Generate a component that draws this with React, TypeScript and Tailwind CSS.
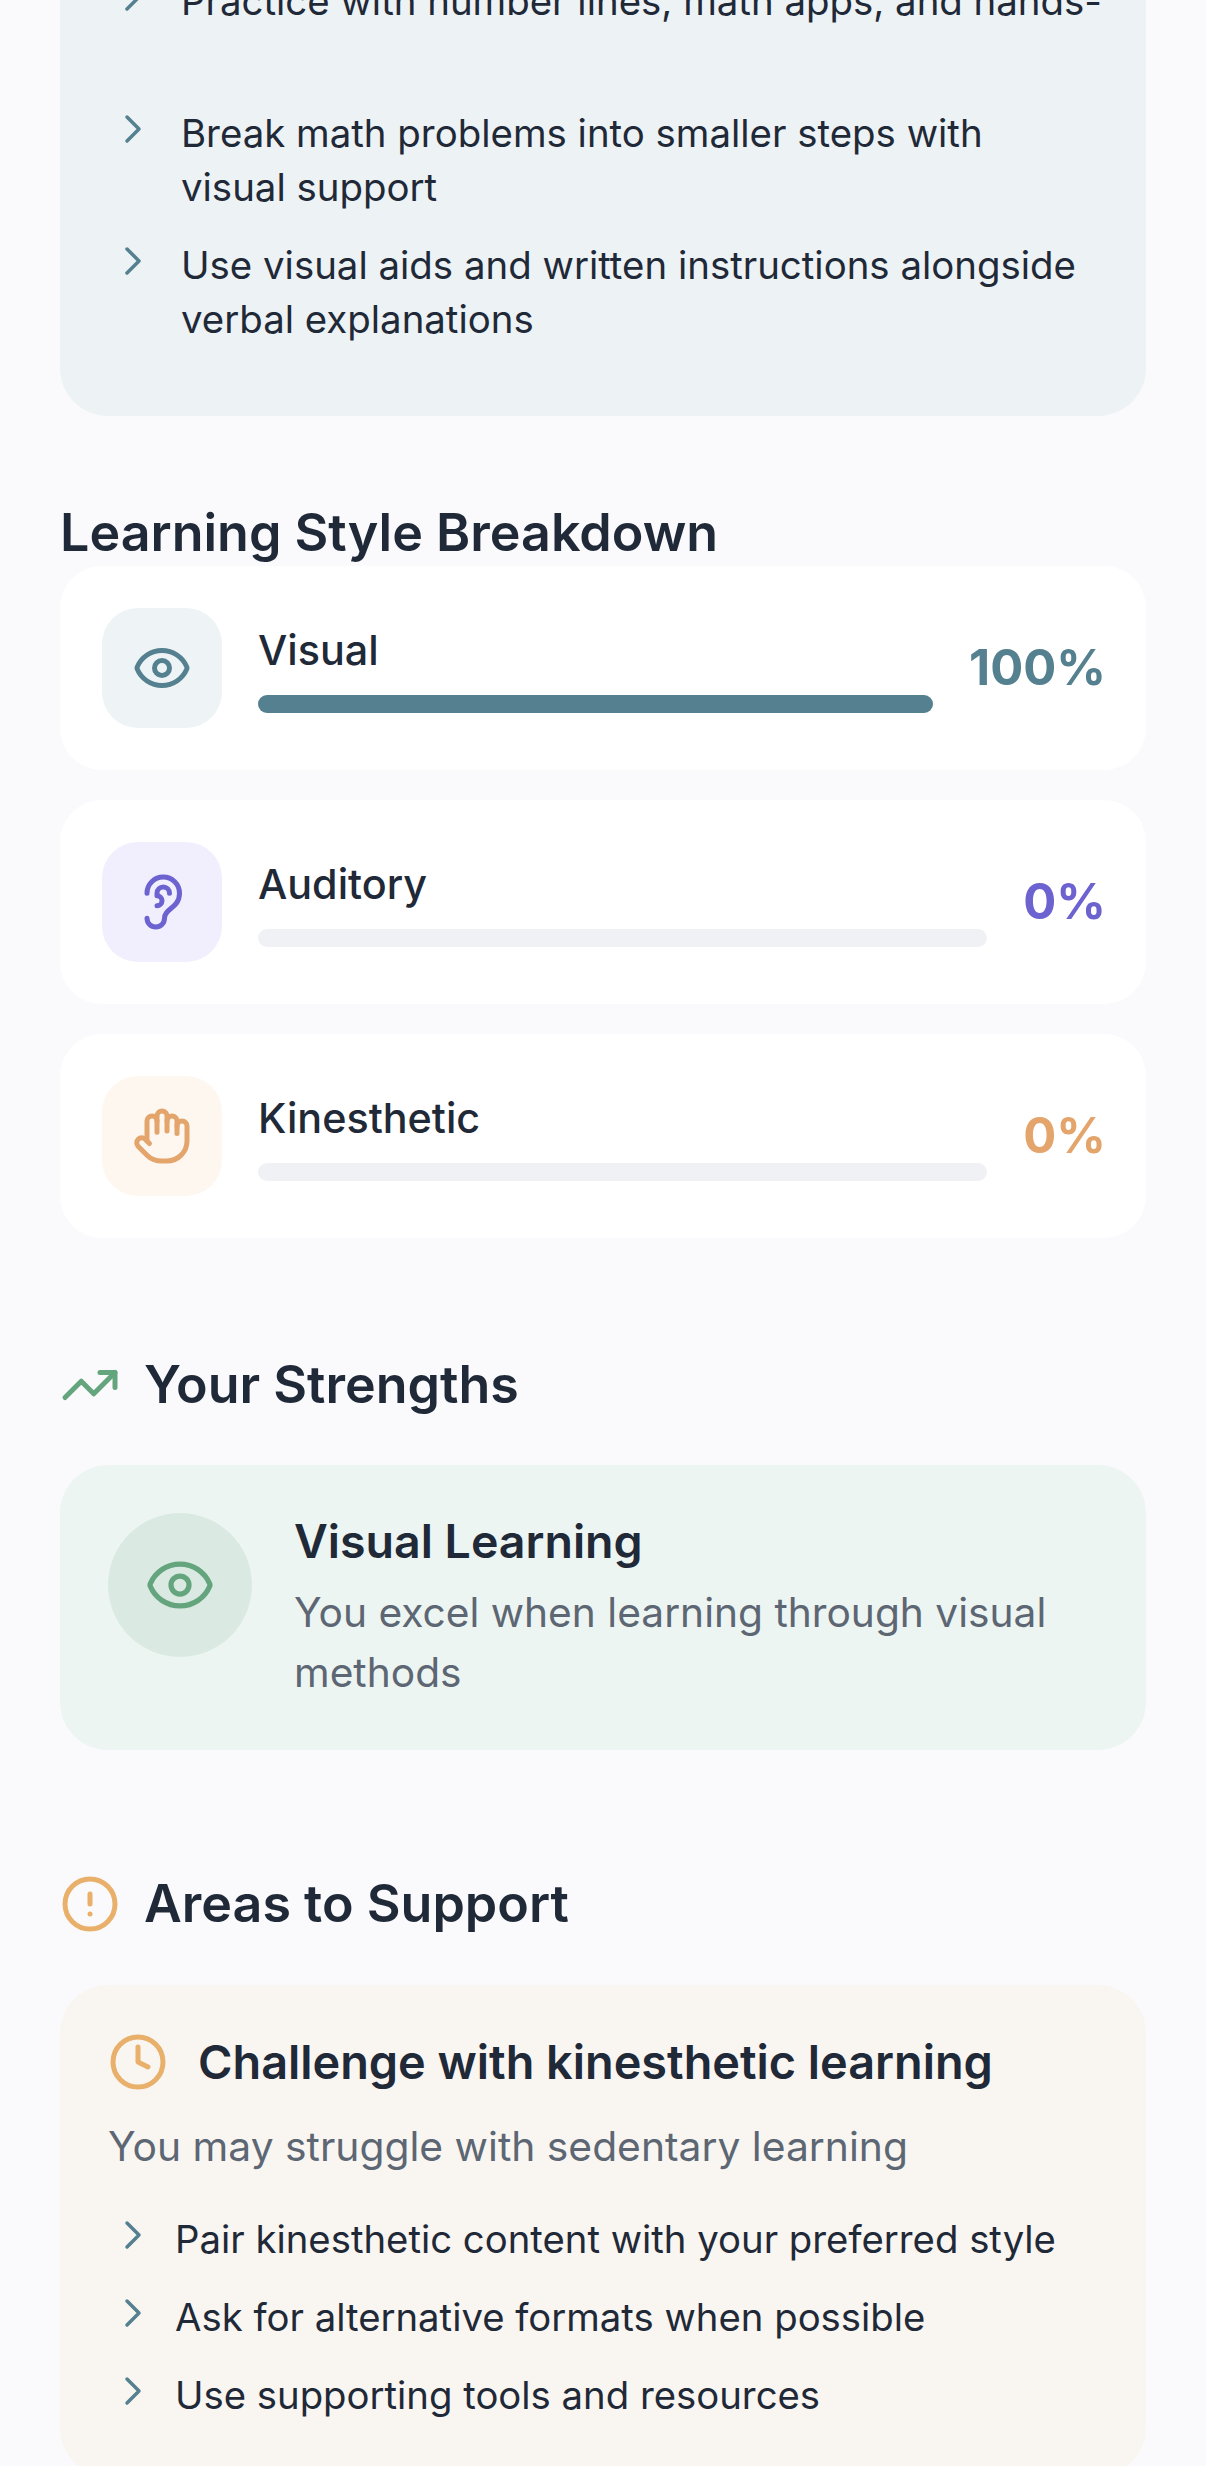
import { ChevronRight, CircleAlert, Clock, Ear, Eye, Hand, TrendingUp } from "lucide-react";
import type { ReactNode } from "react";

const Bullet = ({ children, gap }: { children: ReactNode; gap: string }) => (
  <li className={`flex ${gap}`}>
    <ChevronRight className="w-[48px] h-[48px] shrink-0 text-[#55808f] mt-[-1px]" strokeWidth={1.75} />
    <span>{children}</span>
  </li>
);

const styles = [
  {
    label: "Visual",
    value: 100,
    icon: <Eye className="w-[60px] h-[60px]" strokeWidth={2} />,
    box: "bg-[#eef4f6] text-[#55808f]",
    bar: "bg-[#55808f]",
    text: "text-[#55808f]",
  },
  {
    label: "Auditory",
    value: 0,
    icon: <Ear className="w-[60px] h-[60px]" strokeWidth={2} />,
    box: "bg-[#f1effd] text-[#6c63d0]",
    bar: "bg-[#6c63d0]",
    text: "text-[#6c63d0]",
  },
  {
    label: "Kinesthetic",
    value: 0,
    icon: <Hand className="w-[60px] h-[60px]" strokeWidth={2} />,
    box: "bg-[#fdf7f0] text-[#e3a56c]",
    bar: "bg-[#e3a56c]",
    text: "text-[#e3a56c]",
  },
];

export default function App() {
  return (
    <div className="h-[2466px] overflow-hidden bg-[#fafafd] px-[60px] font-['Inter',sans-serif] text-[#1f2937]">
      <div className="mt-[-26px] rounded-b-[48px] bg-[#edf2f5] pl-[49px] pr-[56px] pb-[70px] text-[38.4px] leading-[54px]">
        <ul className="flex flex-col gap-[24px]">
          <li className="flex gap-[24px] pb-[54px]">
            <ChevronRight className="w-[48px] h-[48px] shrink-0 text-[#55808f] mt-[-1px]" strokeWidth={1.75} />
            <span className="whitespace-nowrap">Practice with number lines, math apps, and hands-</span>
          </li>
          <Bullet gap="gap-[24px]">Break math problems into smaller steps with visual support</Bullet>
          <Bullet gap="gap-[24px]">Use visual aids and written instructions alongside verbal explanations</Bullet>
        </ul>
      </div>

      <h2 className="mt-[84px] text-[52px] leading-[66px] font-semibold">Learning Style Breakdown</h2>
      <div className="flex flex-col gap-[30px]">
        {styles.map((s) => (
          <div key={s.label} className="flex h-[204px] items-center gap-[36px] rounded-[42px] bg-white pl-[42px] pr-[40px]">
            <div className={`flex h-[120px] w-[120px] shrink-0 items-center justify-center rounded-[36px] ${s.box}`}>
              {s.icon}
            </div>
            <div className="flex-1">
              <div className="text-[41.3px] leading-[54px] font-medium">{s.label}</div>
              <div className="mt-[18px] h-[18px] rounded-full bg-[#f0f1f5]">
                <div className={`h-full rounded-full ${s.bar}`} style={{ width: `${s.value}%` }} />
              </div>
            </div>
            <div className={`text-[49px] leading-[60px] font-bold ${s.text}`}>{s.value}%</div>
          </div>
        ))}
      </div>

      <div className="mt-[114px] flex items-center gap-[24px]">
        <TrendingUp className="w-[60px] h-[60px] text-[#64a57e]" strokeWidth={2} />
        <h2 className="text-[52px] leading-[66px] font-semibold">Your Strengths</h2>
      </div>
      <div className="mt-[47px] flex items-start gap-[42px] rounded-[48px] bg-[#edf5f2] px-[48px] pt-[48px] pb-[47px]">
        <div className="flex h-[144px] w-[144px] shrink-0 items-center justify-center rounded-full bg-[#daeae2] text-[#64a57e]">
          <Eye className="w-[72px] h-[72px]" strokeWidth={1.75} />
        </div>
        <div className="mt-[-2px]">
          <div className="text-[46.5px] leading-[60px] font-semibold">Visual Learning</div>
          <p className="mt-[12px] text-[40.7px] leading-[60px] text-[#5d6673]">You excel when learning through visual methods</p>
        </div>
      </div>

      <div className="mt-[121px] flex items-center gap-[24px]">
        <CircleAlert className="w-[60px] h-[60px] text-[#e8b06a]" strokeWidth={2} />
        <h2 className="text-[52px] leading-[66px] font-semibold">Areas to Support</h2>
      </div>
      <div className="mt-[48px] rounded-[48px] bg-[#f9f6f2] pl-[48px] pr-[36px] pt-[44px] pb-[54px]">
        <div className="flex items-center gap-[30px]">
          <Clock className="w-[60px] h-[60px] text-[#e8b06a]" strokeWidth={2} />
          <div className="text-[46.8px] leading-[66px] font-semibold">Challenge with kinesthetic learning</div>
        </div>
        <p className="mt-[24px] text-[40.8px] leading-[54px] text-[#5d6673]">You may struggle with sedentary learning</p>
        <ul className="mt-[39px] flex flex-col gap-[24px] pl-[1px] text-[38.3px] leading-[54px]">
          <Bullet gap="gap-[18px]">Pair kinesthetic content with your preferred style</Bullet>
          <Bullet gap="gap-[18px]">Ask for alternative formats when possible</Bullet>
          <Bullet gap="gap-[18px]">Use supporting tools and resources</Bullet>
        </ul>
      </div>
    </div>
  );
}
